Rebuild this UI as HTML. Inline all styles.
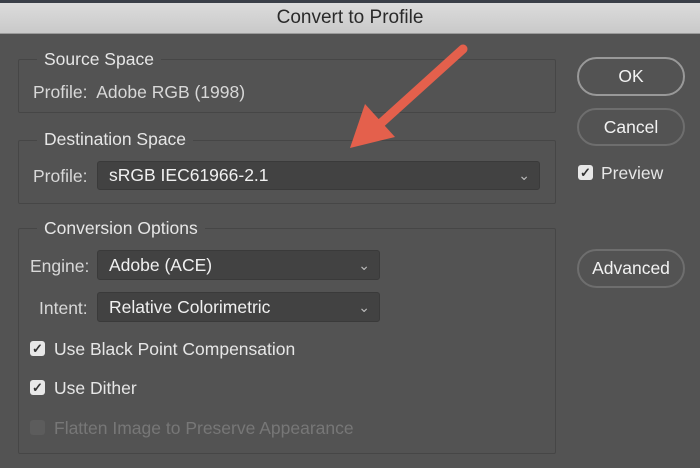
<!DOCTYPE html><html><head><style>
body{margin:0;width:700px;height:468px;overflow:hidden;background:#535353;font-family:"Liberation Sans",sans-serif;color:#e6e6e6;font-size:17.5px;position:relative}
.a{position:absolute}
.title{left:0;top:0;width:700px;height:34px;background:linear-gradient(#dcdcdc,#c9c9c9);border-top:3px solid #3a3f48;box-sizing:border-box;color:#2a2a2a;text-align:center;line-height:30px;font-size:19px;border-bottom:1px solid #9a9a9a}
.box{border:1px solid #464646;border-radius:2px}
.lg{background:#535353;padding:0 7px}
.dd{background:#424242;border:1px solid #3a3a3a;border-radius:3px;box-sizing:border-box;color:#f0f0f0;padding-left:11px}
.dd:after{content:"⌄";position:absolute;right:9px;top:0px;font-size:14px;color:#bbb}
.btn{border:2px solid #888;border-radius:20px;box-sizing:border-box;text-align:center;color:#f2f2f2}
.cb{width:15px;height:15px;background:#e8e8e8;border-radius:3px;color:#333;font-size:13px;line-height:15px;text-align:center;font-weight:bold}
</style></head><body>
<div class="a title">Convert to Profile</div>
<div class="a box" style="left:18px;top:59px;width:536px;height:52px"></div>
<div class="a lg" style="left:37px;top:49px">Source Space</div>
<div class="a" style="left:33px;top:82px;color:#d8d8d8">Profile:&nbsp; Adobe RGB (1998)</div>
<div class="a box" style="left:18px;top:140px;width:536px;height:62px"></div>
<div class="a lg" style="left:37px;top:129px">Destination Space</div>
<div class="a" style="left:33px;top:166px;color:#d8d8d8">Profile:</div>
<div class="a dd" style="left:97px;top:161px;width:443px;height:29px;line-height:27px">sRGB IEC61966-2.1</div>
<div class="a box" style="left:18px;top:228px;width:536px;height:224px"></div>
<div class="a lg" style="left:37px;top:218px">Conversion Options</div>
<div class="a" style="left:30px;top:256px;color:#d8d8d8">Engine:</div>
<div class="a dd" style="left:97px;top:250px;width:283px;height:30px;line-height:28px">Adobe (ACE)</div>
<div class="a" style="left:39px;top:298px;color:#d8d8d8">Intent:</div>
<div class="a dd" style="left:97px;top:292px;width:283px;height:30px;line-height:28px">Relative Colorimetric</div>
<div class="a cb" style="left:30px;top:341px">✓</div>
<div class="a" style="left:54px;top:339px">Use Black Point Compensation</div>
<div class="a cb" style="left:30px;top:380px">✓</div>
<div class="a" style="left:54px;top:378px">Use Dither</div>
<div class="a cb" style="left:30px;top:420px;background:#5c5c5c"></div>
<div class="a" style="left:54px;top:418px;color:#777">Flatten Image to Preserve Appearance</div>
<div class="a btn" style="left:577px;top:57px;width:108px;height:39px;line-height:35px;border-color:#999">OK</div>
<div class="a btn" style="left:577px;top:108px;width:108px;height:38px;line-height:34px;border-color:#6e6e6e">Cancel</div>
<div class="a cb" style="left:578px;top:165px">✓</div>
<div class="a" style="left:601px;top:163px">Preview</div>
<div class="a btn" style="left:577px;top:249px;width:108px;height:39px;line-height:35px;border-color:#6e6e6e">Advanced</div>
<svg class="a" style="left:0;top:0" width="700" height="468"><line x1="463" y1="49" x2="380" y2="124" stroke="#e4604c" stroke-width="9" stroke-linecap="round"/><polygon points="350,148 365,104 395,137" fill="#e4604c"/></svg>
</body></html>
